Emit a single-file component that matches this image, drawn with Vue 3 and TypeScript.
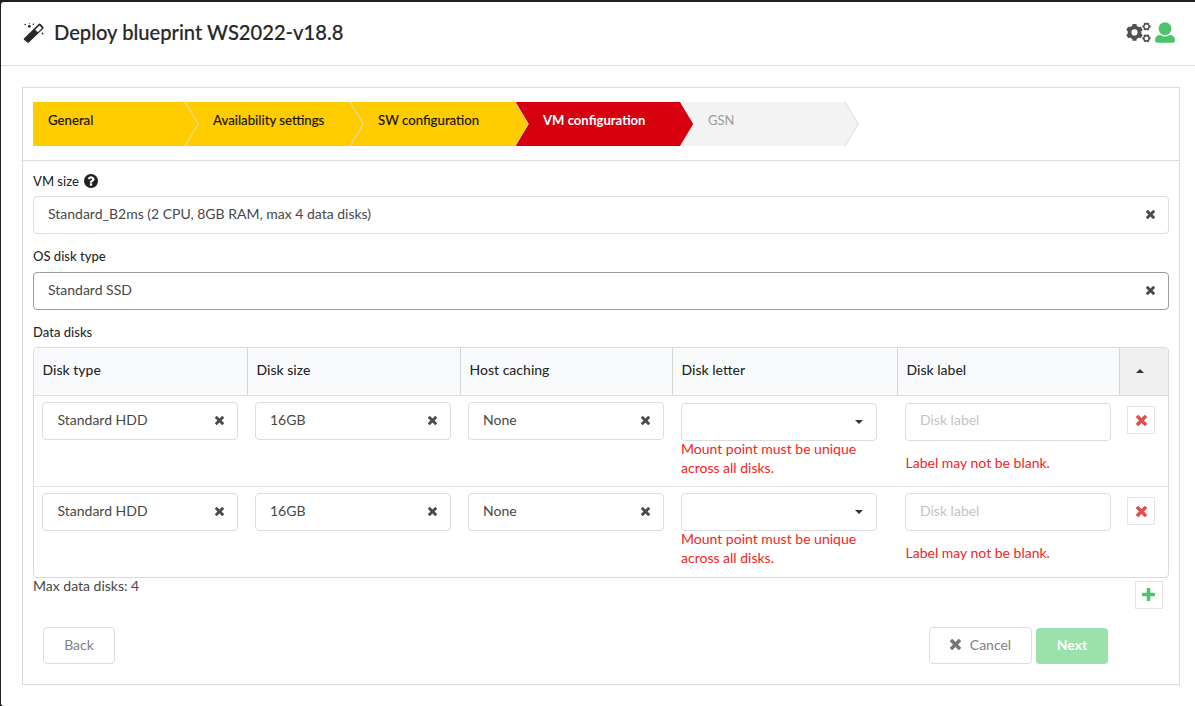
<script setup lang="ts">
interface Step { label: string; state: 'done' | 'active' | 'disabled' }
const steps: Step[] = [
  { label: 'General', state: 'done' },
  { label: 'Availability settings', state: 'done' },
  { label: 'SW configuration', state: 'done' },
  { label: 'VM configuration', state: 'active' },
  { label: 'GSN', state: 'disabled' },
]
const columns: string[] = ['Disk type', 'Disk size', 'Host caching', 'Disk letter', 'Disk label']
interface Disk { id: number; values: string[] }
const disks: Disk[] = [
  { id: 1, values: ['Standard HDD', '16GB', 'None'] },
  { id: 2, values: ['Standard HDD', '16GB', 'None'] },
]

const timesPath =
  'M1490 1322q0 40-28 68l-136 136q-28 28-68 28t-68-28l-294-294-294 294q-28 28-68 28t-68-28l-136-136q-28-28-28-68t28-68l294-294-294-294q-28-28-28-68t28-68l136-136q28-28 68-28t68 28l294 294 294-294q28-28 68-28t68 28l136 136q28 28 28 68t-28 68l-294 294 294 294q28 28 28 68z'
const plusPath =
  'M1600 736v192q0 40-28 68t-68 28h-416v416q0 40-28 68t-68 28h-192q-40 0-68-28t-28-68v-416h-416q-40 0-68-28t-28-68v-192q0-40 28-68t68-28h416v-416q0-40 28-68t68-28h192q40 0 68 28t28 68v416h416q40 0 68 28t28 68z'
const helpPath =
  'M1024 1376v-192q0-14-9-23t-23-9h-192q-14 0-23 9t-9 23v192q0 14 9 23t23 9h192q14 0 23-9t9-23zm256-672q0-88-55.500-163t-138.500-116-170-41q-243 0-371 213-15 24 8 42l132 100q7 6 19 6 16 0 25-12 53-68 86-92 34-24 86-24 48 0 85.500 26t37.500 59q0 38-20 61t-68 45q-63 28-115.500 86.500t-52.500 125.500v36q0 14 9 23t23 9h192q14 0 23-9t9-23q0-19 21.500-49.500t54.500-49.500q32-18 49-28.500t46-35 44.500-48 28-60.500 12.500-81zm384 192q0 209-103 385.500t-279.500 279.500-385.500 103-385.500-103-279.500-279.500-103-385.500 103-385.500 279.500-279.500 385.500-103 385.500 103 279.500 279.500 103 385.500z'

function gear(cx: number, cy: number, outer: number, root: number, hole: number, teeth: number, turn = 0): string {
  const pts: string[] = []
  const pitch = (Math.PI * 2) / teeth
  for (let i = 0; i < teeth; i++) {
    const a = i * pitch + turn - Math.PI / 2
    const corners: [number, number][] = [[-0.3, root], [-0.22, outer], [0.22, outer], [0.3, root]]
    for (const [f, r] of corners) {
      pts.push(`${(cx + r * Math.cos(a + f * pitch)).toFixed(2)} ${(cy + r * Math.sin(a + f * pitch)).toFixed(2)}`)
    }
  }
  return `M${pts.join('L')}ZM${cx - hole} ${cy}a${hole} ${hole} 0 1 0 ${hole * 2} 0a${hole} ${hole} 0 1 0 ${-hole * 2} 0Z`
}
const gears: string = gear(8.5, 10.4, 8.6, 7, 3.1, 6) + gear(20.5, 4.5, 4.2, 3.5, 1.9, 6, 0.52) + gear(20.5, 16.3, 4.2, 3.5, 1.9, 6, 0.52)
</script>

<template>
  <div class="backdrop">
    <div class="modal">
      <header class="head">
        <svg class="wand" viewBox="0 0 22 22">
          <path class="ink" fill-rule="evenodd" d="M1 16.600L15.600 2Q16.600 1 17.600 2L20.200 4.700Q21.200 5.700 20.200 6.700L6.100 20.200Q5.100 21.200 4.100 20.200L1 17.800Q.400 17.200 1 16.600ZM12.200 7.700L14.900 10.300L19 6L16.400 3.400Z" />
          <g class="ink">
            <circle cx="2.200" cy="2.500" r=".8" /><circle cx="6.300" cy="4.300" r="1.400" /><circle cx="10.300" cy="2.300" r=".8" />
            <circle cx="6.300" cy="1.500" r=".5" /><circle cx="19.500" cy="11.500" r=".9" />
          </g>
        </svg>
        <h1>Deploy blueprint WS2022-v18.8</h1>
        <svg class="gears" viewBox="0 0 25 21"><path fill-rule="evenodd" :d="gears" /></svg>
        <svg class="user" viewBox="0 0 20 21"><ellipse cx="10" cy="6.600" rx="6.400" ry="6.400" /><path d="M0 18.500Q0 13 5.200 13Q10 16 14.800 13Q20 13 20 18.500Q20 20.700 17.800 20.700H2.200Q0 20.700 0 18.500Z" /></svg>
      </header>

      <main class="panel">
        <nav class="steps">
          <div v-for="s in steps" :key="s.label" class="step" :class="s.state">
            <span>{{ s.label }}</span>
            <svg class="arrow" viewBox="0 0 14 44"><path class="tip" d="M0 0L13.200 22L0 44Z" /><path v-if="s.state !== 'active'" class="edge" d="M.200 0L13.300 22L.200 44" /></svg>
          </div>
        </nav>

        <section class="form">
          <label class="lbl first">VM size <svg class="help" viewBox="128 128 1536 1536"><path :d="helpPath" /></svg></label>
          <div class="field"><span>Standard_B2ms (2 CPU, 8GB RAM, max 4 data disks)</span><svg class="x" viewBox="302 366 1188 1188"><path :d="timesPath" /></svg></div>
          <label class="lbl">OS disk type</label>
          <div class="field focus"><span>Standard SSD</span><svg class="x" viewBox="302 366 1188 1188"><path :d="timesPath" /></svg></div>
          <label class="lbl last">Data disks</label>

          <div class="table">
            <div class="row thead">
              <div v-for="c in columns" :key="c" class="th">{{ c }}</div>
              <div class="th sort"><svg class="caret" viewBox="0 0 8 4"><path d="M0 4L4 0L8 4Z" /></svg></div>
            </div>
            <div v-for="d in disks" :key="d.id" class="row disk">
              <div v-for="(v, i) in d.values" :key="i" class="td"><div class="field"><span>{{ v }}</span><svg class="x" viewBox="302 366 1188 1188"><path :d="timesPath" /></svg></div></div>
              <div class="td low letter">
                <div class="field"><span></span><svg class="caret" viewBox="0 0 8 4"><path d="M0 0H8L4 4Z" /></svg></div>
                <p class="error">Mount point must be unique across all disks.</p>
              </div>
              <div class="td low label">
                <div class="field">Disk label</div>
                <p class="error">Label may not be blank.</p>
              </div>
              <div class="td action"><button class="square red"><svg viewBox="302 366 1188 1188"><path :d="timesPath" /></svg></button></div>
            </div>
          </div>

          <div class="under">
            <span>Max data disks: 4</span>
            <button class="square green"><svg viewBox="192 128 1408 1408"><path :d="plusPath" /></svg></button>
          </div>
          <footer class="foot">
            <button class="btn back">Back</button>
            <button class="btn cancel"><svg viewBox="302 366 1188 1188"><path :d="timesPath" /></svg>Cancel</button>
            <button class="btn next">Next</button>
          </footer>
        </section>
      </main>
    </div>
  </div>
</template>

<style>
body { background: #231f20; }
</style>

<style scoped>
* { box-sizing: border-box; }
.backdrop { height: 706px; padding: 2px 0 0 1px; background: #231f20; overflow: hidden; font-family: Lato, "Open Sans", sans-serif; font-size: 14px; line-height: 19px; color: rgba(0, 0, 0, .87); }
.modal { height: 704px; background: #fff; border-radius: 3px 0 0 3px; }
.head { display: flex; align-items: flex-start; height: 64px; border-bottom: 1px solid #dcdddd; padding: 0 20px 0 22px; }
svg { display: block; flex: none; }
.wand { width: 22px; height: 22px; margin-top: 20px; }
.ink { fill: #272829; }
h1 { margin: 16px auto 0 9px; font-size: 20.15px; line-height: 28px; font-weight: 500; color: #272829; -webkit-text-stroke: .15px #272829; }
.gears { width: 25px; height: 21px; margin: 20px 4px 0 0; fill: #515151; }
.user { width: 20px; height: 21px; margin-top: 20px; fill: #4bc46d; }
.panel { margin: 21px 15px 0 21px; height: 598px; border: 1px solid #d9dadb; }
.steps { display: flex; height: 73px; padding: 14px 0 0 10px; border-bottom: 1px solid #d9dadb; }
.step { position: relative; width: 165px; height: 44px; padding: 9px 0 0 28px; font-size: 13.2px; font-weight: 500; white-space: nowrap; background: #f3f3f3; color: #9c9c9c; }
.step:first-child { width: 152px; padding-left: 15px; }
.step.done { background: #ffcc00; color: #1d1700; -webkit-text-stroke: .12px #1d1700; }
.step.active { background: #d6000f; color: #fff; font-size: 13.1px; font-weight: 700; }
.step.disabled { font-size: 13px; font-weight: 400; }
.arrow { position: absolute; z-index: 1; top: 0; left: 100%; width: 14px; height: 44px; }
.tip { fill: #f3f3f3; }
.done .tip { fill: #ffcc00; }
.active .tip { fill: #d6000f; }
.edge { fill: none; stroke: #dcdcdc; stroke-width: 1; }
.form { padding: 0 10px; }
.lbl { display: flex; align-items: center; gap: 5px; height: 38px; padding-top: 6px; font-size: 13.05px; font-weight: 500; }
.first { height: 35px; padding-top: 5px; }
.last { height: 37px; padding-top: 7px; }
.help { width: 14px; height: 14px; fill: #1f2021; }
.field { display: flex; align-items: center; justify-content: space-between; height: 38px; padding: 0 13.500px 3px 14px; border: 1px solid #dcddde; border-radius: 4px; background: #fff; color: #484849; }
.focus { border-color: #9c9d9e; }
.x { width: 9px; height: 9px; fill: #4b4b4b; margin-top: 2px; }
.caret { width: 8px; height: 4px; fill: #333; }
.field .caret { margin-top: 2px; }
.table { height: 231px; border: 1px solid #d9dadb; border-radius: 4px; overflow: hidden; }
.row { display: grid; grid-template-columns: 213px 213px 212px 225px 222px 49px; }
.thead { height: 48px; background: #f9fafb; border-bottom: 1px solid #dfe0e0; }
.th { padding: 12px 8px 0 8.500px; font-weight: 500; border-left: 1px solid #d5d6d6; }
.th:first-child { border-left: 0; }
.th.sort { background: #f0f0f0; padding: 21px 0 0 16px; }
.disk { height: 90px; }
.disk + .disk { height: 91px; border-top: 1px solid #e5e5e6; }
.td { padding: 6px 8px 0; }
.td .field { width: 196px; }
.td:first-child .field { padding-left: 14.500px; }
.low { padding-top: 7px; }
.disk + .disk .low { padding-top: 6px; }
.letter { padding-left: 9px; }
.label .field { width: 206px; color: #c3c4c5; justify-content: flex-start; padding-bottom: 5px; }
.disk + .disk .label .field { padding-bottom: 4px; }
.error { margin: -2px 0 0; width: 196px; color: #f52424; }
.label .error { margin-top: 12px; padding-left: .5px; }
.action, .disk + .disk .action { padding: 10px 8px; }
.square { display: flex; align-items: center; justify-content: center; width: 28px; height: 28px; padding: 0; background: #fff; border: 1px solid #e6e6e6; }
.square svg { width: 11px; height: 11px; }
.red { fill: #e0504f; }
.green { fill: #4bc46d; padding: 0 1px 1px 0; }
.green svg { width: 13px; height: 13px; }
.under { display: flex; justify-content: space-between; height: 49px; padding-right: 6px; color: #484849; }
.under span { margin-top: -2px; }
.under .square { margin-top: 3px; }
.foot { display: flex; padding: 0 61px 0 10px; }
.btn { height: 37px; font: 14px/19px Lato, sans-serif; color: #828283; background: #fff; border: 1px solid #dcddde; border-radius: 4px; padding: 0 0 2px; }
.back { width: 72px; margin-right: auto; }
.cancel { display: flex; align-items: center; justify-content: center; gap: 9px; width: 103px; margin-right: 4px; }
.cancel svg { width: 11px; height: 11px; fill: #777; }
.next { width: 72px; height: 36px; margin-top: 1px; padding-bottom: 3px; background: #9be1ab; border: 0; color: #fff; font-weight: 700; }
</style>
